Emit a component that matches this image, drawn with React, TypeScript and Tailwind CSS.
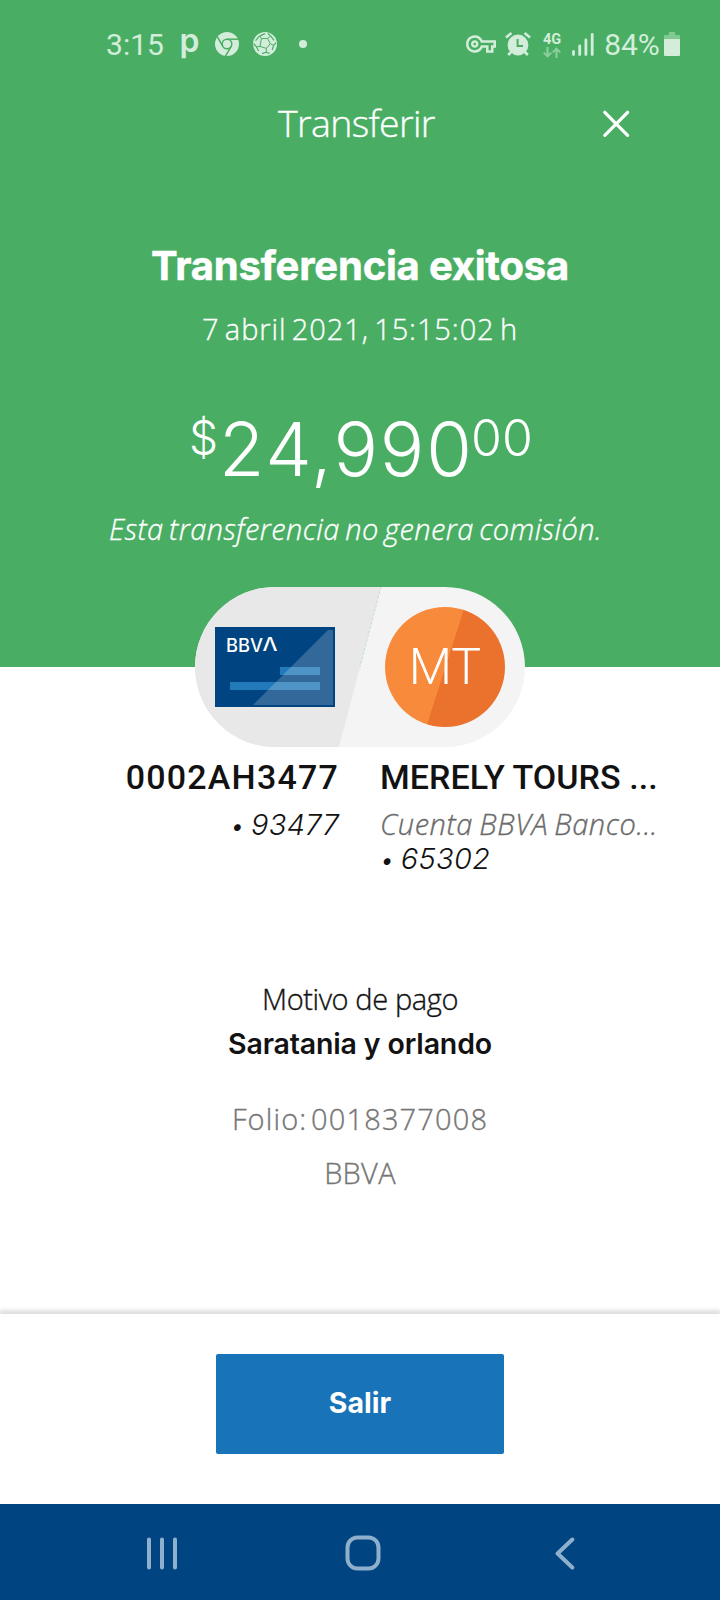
import { MdOutlineVpnKey } from "react-icons/md";

const LIGHT = "font-['Open_Sans',sans-serif] font-light [-webkit-text-stroke:0.35px_currentColor]";
const SOLID = "font-['Inter',sans-serif]";

function ChromeIcon() {
  return (
    <svg className="ml-[15px] size-[24px]" viewBox="0 0 24 24" fill="none" stroke="#49ae64" strokeWidth="1.5">
      <circle cx="12" cy="12" r="12" fill="#d3edda" stroke="none" />
      <circle cx="12" cy="12" r="4.8" />
      <path d="M12 7.2H23.5" />
      <path d="M12 7.2H23.5" transform="rotate(120 12 12)" />
      <path d="M12 7.2H23.5" transform="rotate(240 12 12)" />
    </svg>
  );
}

function BallIcon() {
  return (
    <svg className="ml-[14px] size-[24px]" viewBox="0 0 24 24" fill="none" stroke="#49ae64">
      <circle cx="12" cy="12" r="12" fill="#d3edda" stroke="none" />
      <path d="M8.4 6.6L14.6 6.4L17.2 11.6L13.4 16.4L7 14.4Z" strokeWidth="1" />
      <path d="M8.4 6.6L6.6 3.8M14.6 6.4L17.6 4.2M17.2 11.6L20.6 13.4M13.4 16.4L13.2 20M7 14.4L3.6 14.8" strokeWidth="1" />
      <path d="M7 3.9L12 1.6M6.6 3.8L2.6 8.6M17.6 4.2L14.8 1.4M17.8 4.2L21 8.4M20.6 13.4L23.2 10.6M20.6 13.4L19.2 18M13.2 20.2L9 21.6M13.2 20.2L16.6 21.4M3.4 14.8L.8 11.6M3.4 14.8L5.6 19" strokeWidth="1.2" />
    </svg>
  );
}

function AlarmIcon() {
  return (
    <svg className="ml-[9px] h-[24px] w-[26px]" viewBox="0 0 26 24" fill="none" stroke="#d3edda" strokeWidth="2.6">
      <circle cx="13" cy="13" r="10.4" fill="#d3edda" stroke="none" />
      <path d="M1 5.6L6.4 1M25 5.6L19.6 1M6.5 19.5L3.2 23M19.5 19.5L22.8 23" />
      <path d="M12.6 7V14H18" stroke="#49ae64" strokeWidth="2" />
    </svg>
  );
}

function StatusBar() {
  return (
    <div className="flex h-[88px] items-center pl-[106px] font-['Roboto',sans-serif] text-[#d3edda]">
      <span className="mt-[1px] w-[58px] text-[30px] leading-none">3:15</span>
      <span className="ml-[15px] -mt-[7px] w-[21px] font-['Inter',sans-serif] text-[32px] leading-none font-semibold">p</span>
      <ChromeIcon />
      <BallIcon />
      <span className="ml-[22px] size-[8px] rounded-full bg-[#d3edda]" />
      <MdOutlineVpnKey className="ml-[159px] size-[30px]" />
      <AlarmIcon />
      <div className="ml-[11px] mt-[2px] flex w-[20px] flex-col items-center">
        <span className="text-[14.5px] leading-[14px] font-bold">4G</span>
        <svg className="h-[11px] w-[18px]" viewBox="0 0 18 11" fill="none" stroke="#8fcea0" strokeWidth="2">
          <path d="M4.5 0V9M.8 5.6L4.5 9.4L8.2 5.6M13.5 11V2M9.8 5.4L13.5 1.6L17.2 5.4" />
        </svg>
      </div>
      <svg className="ml-[10px] h-[24px] w-[22px]" viewBox="0 0 22 24" stroke="#d3edda" strokeWidth="2.8" strokeLinecap="round">
        <path d="M1.5 19.5V22.5M7.7 14V22.5M13.9 8V22.5M20.2 2.5V22.5" />
      </svg>
      <span className="mt-[1px] ml-[8px] w-[60px] text-[30px] leading-none">84%</span>
      <svg className="ml-[2px] h-[24px] w-[16px]" viewBox="0 0 16 24">
        <path d="M5 0h6v3h5v5H0V3h5z" fill="#82c994" />
        <rect y="7" width="16" height="17" rx="1" fill="#d3edda" />
      </svg>
    </div>
  );
}

function BankCard() {
  return (
    <svg className="h-[80px] w-[120px]" viewBox="0 0 120 80">
      <rect width="120" height="80" fill="#004481" />
      <rect x="65" y="40" width="40" height="8" fill="#237aba" />
      <rect x="15" y="55" width="90" height="8" fill="#237aba" />
      <path d="M113 3H118V78H38Z" fill="#fff" fillOpacity=".2" />
      <g fill="#fff" className="font-['Inter',sans-serif] text-[18px] font-medium">
        <text x="11" y="25" textLength="37" lengthAdjust="spacingAndGlyphs">BBV</text>
        <text x="47.5" y="24" textLength="15" lengthAdjust="spacingAndGlyphs">Λ</text>
      </g>
    </svg>
  );
}

function Parties() {
  return (
    <div className="relative mx-auto -mt-[80px] flex h-[160px] w-[330px] items-center justify-between overflow-hidden rounded-full bg-[#f4f4f4] px-5">
      <svg className="absolute inset-0 h-[160px] w-[330px]" viewBox="0 0 330 160">
        <path d="M0 0H186L144 160H0Z" fill="#e8e8e8" />
        <path d="M186 0L165 80" stroke="#b9dcc3" strokeWidth=".8" strokeDasharray="3 1.5" />
      </svg>
      <div className="relative">
        <BankCard />
      </div>
      <div className="relative flex size-[120px] items-center justify-center overflow-hidden rounded-full bg-[linear-gradient(107.7deg,#f78b3b_50%,#ea722d_50.5%)]">
        <span className="font-['Roboto',sans-serif] text-[50px] leading-none font-light text-white">MT</span>
      </div>
    </div>
  );
}

export default function App() {
  return (
    <div className="flex h-[1600px] w-[720px] flex-col overflow-hidden bg-white text-[#121212]">
      <header className="h-[667px] shrink-0 bg-[#49ae64] text-center whitespace-nowrap text-white">
        <StatusBar />
        <div className="flex h-[70px] items-center pl-[278px]">
          <h1 className={`${LIGHT} w-[160px] text-left text-[37.5px] leading-[70px] tracking-[-0.65px]`}>Transferir</h1>
          <svg className="ml-[165px] size-[27px]" viewBox="0 0 27 27" stroke="#fff" strokeWidth="3.2" strokeLinecap="round">
            <path d="M1.8 2.3L24.6 25.4M24.6 2.3L1.8 25.4" />
          </svg>
        </div>
        <h2 className={`${SOLID} mt-[78px] text-[40px] leading-[60px] font-bold tracking-[-0.2px] [-webkit-text-stroke:0.5px_currentColor]`}>Transferencia exitosa</h2>
        <p className={`${LIGHT} text-[29px] leading-[66px] tracking-[0.9px] [word-spacing:-3px]`}>7 abril 2021, 15:15:02 h</p>
        <div className={`${SOLID} mt-[34px] flex h-[100px] items-start justify-center text-left font-light`}>
          <span className="mt-[16px] w-[30px] text-[46px] leading-[50px]">$</span>
          <span className="mt-[16px] w-[252px] text-[74px] leading-[74px] tracking-[1.9px]">24,990</span>
          <span className="mt-[17px] w-[60px] text-[50px] leading-[50px]">00</span>
        </div>
        <p className={`${LIGHT} mt-[13px] pr-[9px] text-[29px] leading-[40px] tracking-[0.43px] [word-spacing:-2.5px] italic`}>Esta transferencia no genera comisión.</p>
      </header>

      <Parties />

      <section className="flex h-[129px] shrink-0 justify-between pr-[59px] pl-[60px] whitespace-nowrap">
        <div className="w-[279px] text-right">
          <div className="font-['Roboto',sans-serif] text-[34px] leading-[60px] font-medium tracking-[1.2px]">0002AH3477</div>
          <div className={`${SOLID} text-[29px] leading-[35px] font-light tracking-[0.3px] [word-spacing:-2px] italic`}>
            <span className="text-[25px]">•</span> 93477
          </div>
        </div>
        <div className="w-[281px]">
          <div className="font-['Roboto',sans-serif] text-[34px] leading-[60px] font-medium tracking-[0.05px]">MERELY TOURS ...</div>
          <div className={`${LIGHT} -mt-[1px] text-[29px] leading-[35px] tracking-[0.6px] [word-spacing:-2px] text-[#6a6a6a] italic`}>Cuenta BBVA Banco...</div>
          <div className={`${SOLID} text-[29px] leading-[35px] font-light tracking-[0.3px] [word-spacing:-2px] italic`}>
            <span className="text-[25px]">•</span> 65302
          </div>
        </div>
      </section>

      <section className="mt-[101px] h-[337px] shrink-0 text-center">
        <p className={`${LIGHT} text-[29px] leading-[44px] tracking-[-0.4px]`}>Motivo de pago</p>
        <p className={`${SOLID} text-[28.5px] leading-[46px] font-semibold tracking-[-0.15px]`}>Saratania y orlando</p>
        <p className={`${LIGHT} mt-[25px] text-[29px] leading-[54px] tracking-[1.15px] [word-spacing:-5px] text-[#757575]`}>Folio: 0018377008</p>
        <p className={`${LIGHT} text-[29px] leading-[54px] tracking-[0.3px] text-[#757575]`}>BBVA</p>
      </section>

      <footer className="flex h-[190px] shrink-0 justify-center bg-white pt-[40px] shadow-[0_-3px_4px_1px_rgba(0,0,0,0.13)]">
        <button className={`${SOLID} h-[100px] w-[288px] rounded-[2px] bg-[#1973b8] pb-[2px] text-[28.5px] font-bold text-white`}>Salir</button>
      </footer>

      <nav className="z-10 flex h-[96px] shrink-0 items-center bg-[#004481] pt-[2px]">
        <svg className="ml-[146px] h-[33px] w-[33px]" viewBox="0 0 33 33" stroke="#8fb0cd" strokeWidth="4" strokeLinecap="round">
          <path d="M3 2.5V30.5M16 2.5V30.5M29 2.5V30.5" />
        </svg>
        <svg className="ml-[166px] size-[36px]" viewBox="0 0 36 36" fill="none" stroke="#8fb0cd" strokeWidth="4">
          <rect x="2.5" y="2.5" width="31" height="31" rx="10" />
        </svg>
        <svg className="ml-[173px] h-[33px] w-[21px]" viewBox="0 0 21 33" fill="none" stroke="#8fb0cd" strokeWidth="4" strokeLinecap="round" strokeLinejoin="round">
          <path d="M18.3 2.5L3.6 16.5L18.3 30.5" />
        </svg>
      </nav>
    </div>
  );
}
